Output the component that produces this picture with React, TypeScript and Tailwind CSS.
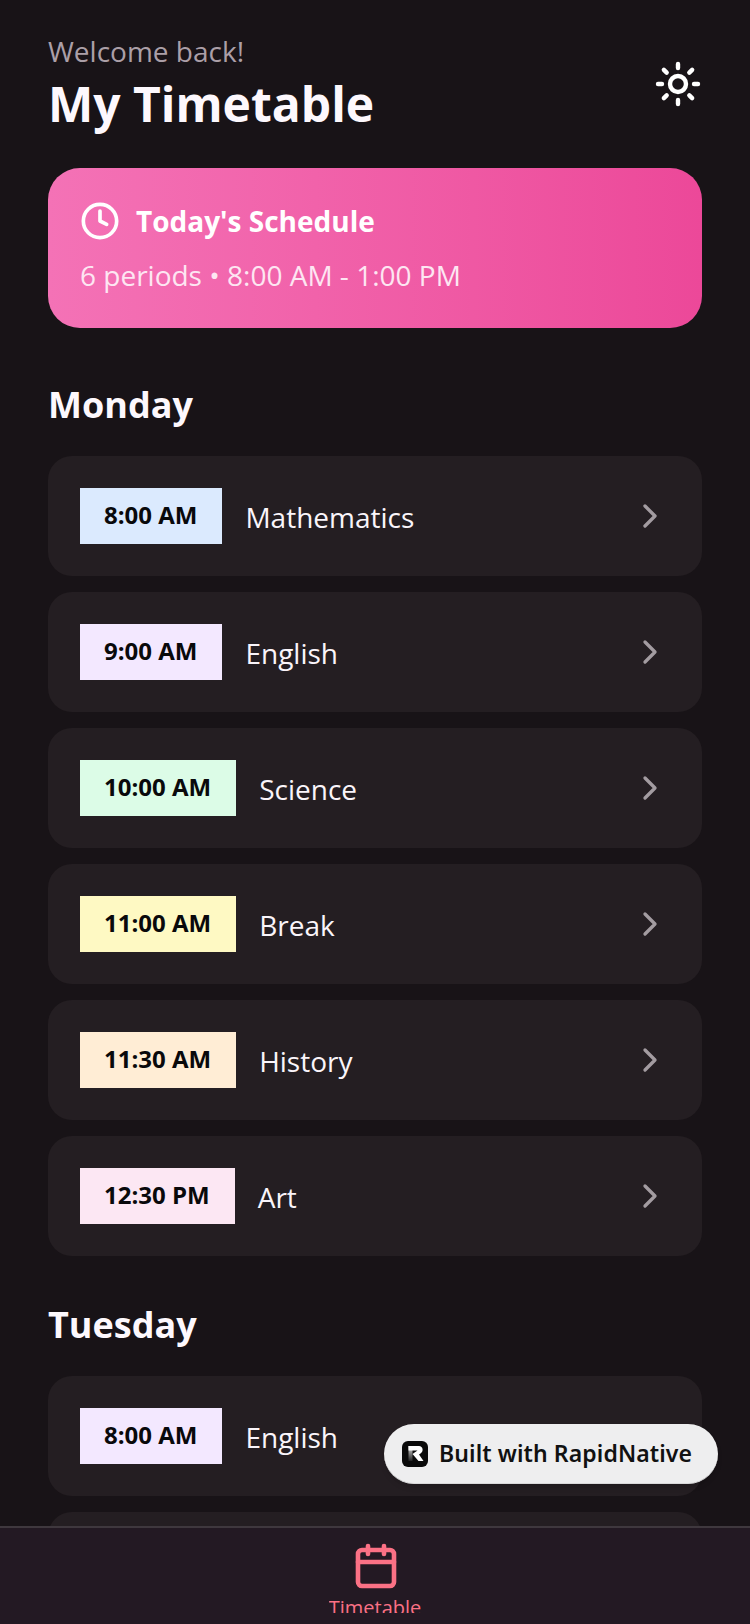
import { Calendar, ChevronRight, Clock, Sun } from "lucide-react"

type Period = { time: string; subject: string; color: string }

const monday: Period[] = [
  { time: "8:00 AM", subject: "Mathematics", color: "bg-[#dbeafe]" },
  { time: "9:00 AM", subject: "English", color: "bg-[#f3e8ff]" },
  { time: "10:00 AM", subject: "Science", color: "bg-[#dcfce7]" },
  { time: "11:00 AM", subject: "Break", color: "bg-[#fef9c3]" },
  { time: "11:30 AM", subject: "History", color: "bg-[#ffedd5]" },
  { time: "12:30 PM", subject: "Art", color: "bg-[#fce7f3]" },
]

function PeriodRow({ time, subject, color }: Period) {
  return (
    <div className="flex h-[120px] shrink-0 items-center rounded-3xl bg-[#241e22] pr-8 pl-8">
      <div className={`flex h-14 items-center pr-[25px] pl-6 ${color}`}>
        <span className="-mt-0.5 text-2xl leading-8 font-bold text-[#09090b]">{time}</span>
      </div>
      <span className="mt-0.5 ml-[23px] flex-1 text-[28px] leading-10 text-[#faf5fa]">{subject}</span>
      <ChevronRight className="size-10 text-[#a39ca1]" strokeWidth={2} />
    </div>
  )
}

export default function App() {
  return (
    <div className="relative flex h-[1624px] w-[750px] flex-col overflow-hidden bg-[#181317] font-['Open_Sans',sans-serif]">
      <main className="flex flex-1 flex-col overflow-hidden px-12 pt-[32px]">
        <header className="flex shrink-0 items-center justify-between">
          <div>
            <p className="-mt-px mb-px text-[28px] leading-10 text-[#ab9fa7]">Welcome back!</p>
            <h1 className="text-5xl leading-[64px] font-bold text-[#fdf8fd]">My Timetable</h1>
          </div>
          <button className="flex size-12 items-center justify-center">
            <Sun className="size-12 shrink-0 text-white" strokeWidth={2.2} />
          </button>
        </header>

        <section className="mt-[32px] flex h-40 shrink-0 flex-col justify-center rounded-[32px] bg-gradient-to-r from-[#f472b6] to-[#ec4899] px-8 pt-0.5">
          <div className="flex items-center gap-4">
            <Clock className="-mt-0.5 size-10 text-white" strokeWidth={2.2} />
            <span className="-mt-0.5 text-[28px] leading-10 font-bold text-white">Today's Schedule</span>
          </div>
          <p className="mt-[14px] text-[28px] leading-10 text-[#fde6f2]">6 periods • 8:00 AM - 1:00 PM</p>
        </section>

        <h2 className="mt-[49px] text-4xl leading-[56px] font-bold text-[#fdf8fd]">Monday</h2>
        <div className="mt-[23px] flex flex-col gap-4">
          {monday.map((p) => (
            <PeriodRow key={p.time} {...p} />
          ))}
        </div>

        <h2 className="mt-[41px] text-4xl leading-[56px] font-bold text-[#fdf8fd]">Tuesday</h2>
        <div className="mt-[23px] flex flex-col gap-4">
          <PeriodRow time="8:00 AM" subject="English" color="bg-[#f3e8ff]" />
          <div className="h-[120px] shrink-0 rounded-3xl bg-[#241e22]" />
        </div>
      </main>

      <nav className="flex h-[98px] shrink-0 flex-col items-center overflow-hidden border-t-2 border-[#3f383e] bg-[#231923]">
        <Calendar className="mt-[14px] ml-[2px] size-12 shrink-0 text-[#fb7185]" strokeWidth={2.3} />
        <div className="mt-1 h-[19px] overflow-hidden">
          <span className="block text-xl leading-7 text-[#fb7185]">Timetable</span>
        </div>
      </nav>

      <div className="absolute top-[1424px] left-[384px] flex h-[60px] w-[334px] items-center gap-[11px] rounded-full border-b border-[#d9d9da] bg-[#eeeeef] pl-[18px] shadow-md">
        <svg viewBox="0 0 26 26" className="size-[26px]">
          <defs>
            <linearGradient id="stem" x1="0" y1="0" x2="0" y2="1">
              <stop offset="0" stopColor="#ddd" />
              <stop offset="1" stopColor="#222" />
            </linearGradient>
          </defs>
          <rect width="26" height="26" rx="6" fill="#0a0a0a" />
          <path d="M6.5 5h4v15h-4z" fill="url(#stem)" />
          <path d="M6.5 5h10.5c4 0 5 5.500 1.500 7.500l-1.500 1 4.500 6.500h-5L10.500 13l5-3.500H6.500z" fill="#fff" />
        </svg>
        <span className="font-['Noto_Sans',sans-serif] text-[23px] font-semibold tracking-[0.1px] text-[#111]">
          Built with RapidNative
        </span>
      </div>
    </div>
  )
}
